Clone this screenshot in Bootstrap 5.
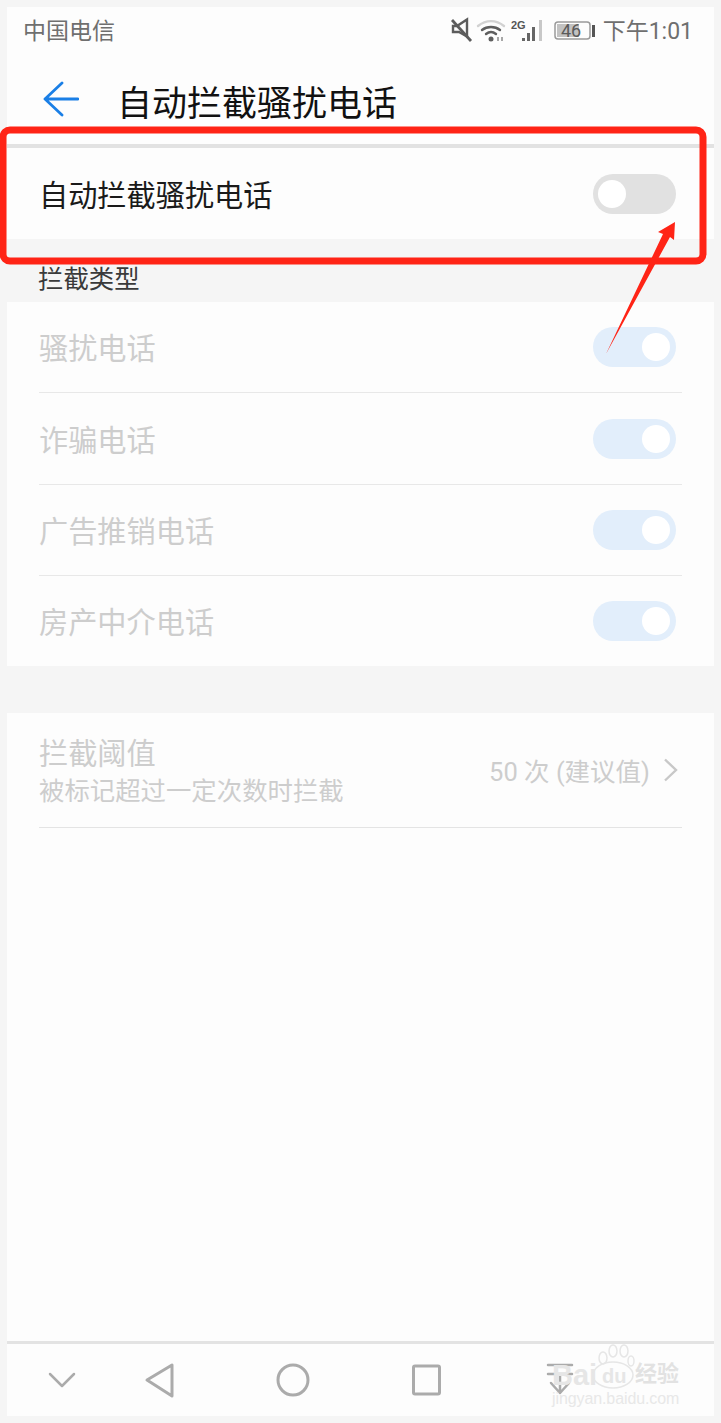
<!DOCTYPE html>
<html lang="zh">
<head>
<meta charset="utf-8">
<title>自动拦截骚扰电话</title>
<link rel="stylesheet" href="https://cdn.jsdelivr.net/npm/bootstrap@5.3.0/dist/css/bootstrap.min.css">
<style>
html,body{height:100%;margin:0}
body{background:#f5f5f5;font-family:Roboto,"Noto Sans CJK SC",sans-serif;padding:7px;position:relative;overflow:hidden}
.phone{height:1409px;display:flex;flex-direction:column}
.sbar{height:48px;background:#fdfdfd;padding:0 21px 0 16px;color:#6f6f6f;font-size:23px;line-height:48px}
.sbar svg{display:block}
.sbar span{margin-top:2px}
.tbar{height:89px;background:#fdfdfd;padding-left:36px;gap:38px}
.tbar svg{margin-top:-1px}
.tbar .ttl{font-size:35px;color:#111;line-height:1;margin-top:9px}
.topline{height:4px;background:#e2e2e2}
.mainrow{height:91px;background:#fdfdfd;padding:0 38px 0 32px;font-size:29.2px;color:#1a1a1a;line-height:1}
.mainrow span{margin-top:6px}
.mainrow .tog{margin-top:1px}
.sect{height:63px;color:#3a3a3a;font-size:25.4px;line-height:1;padding:28px 0 0 31px}
.panel{background:#fdfdfd;padding:0 32px}
.swrow{height:91px;font-size:29.2px;color:#cdcdcd;line-height:1;border-bottom:1px solid #e8e8e8;padding-right:6px}
.swrow.tall{height:92px}
.swrow span{margin-top:6px}
.swrow.last{border-bottom:0;height:90px}
.tog{width:83px;height:40px;border-radius:20px;flex:none;padding:6px;display:flex}
.tog i{display:block;width:28px;height:28px;border-radius:50%;background:#fff}
.tog.off{background:#e1e1e1}
.tog.off i{margin-left:-1px}
.tog.on{background:#e2eefb;justify-content:flex-end}
.gapz{height:47px}
.rest{flex:1 1 auto}
.thr{height:115px;border-bottom:1px solid #e4e4e4;color:#cdcdcd}
.thr .a{font-size:29.2px;line-height:36px;margin-top:2px}
.thr .b{font-size:25.4px;line-height:32px;margin-top:3px}
.thr .c{font-size:25.5px;gap:13px;padding-right:4px}
.thr .c span{margin-top:4px}
.navline{height:3px;background:#e3e3e3}
.navz{height:72px;background:#fdfdfd;position:relative}
.navz svg{position:absolute;left:0;top:0}
.wm{position:absolute;left:545px;top:0;line-height:1;white-space:nowrap;font-family:"Liberation Sans","Noto Sans CJK SC",sans-serif}
.wm .w1{position:absolute;left:0;top:17px;font-size:29px;font-weight:700;color:#e6e6e6}
.wm .w4{position:absolute;left:50px;top:22px;font-size:20px;font-weight:700;color:#e6e6e6}
.wm .w2{position:absolute;left:83px;top:19px;font-size:22px;font-weight:700;color:#e2e2e2}
.wm .w3{position:absolute;left:0;top:47px;font-size:16px;letter-spacing:-.1px;color:#e8e8e8}
.anno{position:absolute;left:0;top:0;pointer-events:none}
</style>
</head>
<body>
<div class="phone">
  <div class="sbar d-flex align-items-center justify-content-between">
    <span>中国电信</span>
    <div class="d-flex align-items-center">
      <svg width="152" height="32" viewBox="0 0 152 32" fill="none">
        <g stroke="#5c5c5c"><path d="M1 5 20 26" stroke-width="2.800"/><path d="M2 11h4l10-6.500v17L8 17H2z" stroke-width="2.400"/></g>
        <g stroke-linecap="round" fill="none"><path d="M27 11c8-6.500 18-6.500 26 0" stroke="#d2d2d2" stroke-width="2.400"/><path d="M31 15c5-4 13-4 18 0" stroke="#5e5e5e" stroke-width="2.400"/><path d="M35 19c3-2.400 7-2.400 10 0" stroke="#5e5e5e" stroke-width="2.400"/></g>
        <circle cx="40" cy="24" r="2.500" fill="#5e5e5e"/>
        <path d="M47 22v4M51 26v-4" stroke="#8a8a8a" stroke-width="1.500"/>
        <text x="60" y="14" font-size="11" font-weight="700" fill="#555" font-family="Liberation Sans">2G</text>
        <g fill="#666"><rect x="71" y="23" width="3" height="3"/><rect x="76" y="18" width="3" height="8"/><rect x="81" y="12" width="3" height="14"/></g><rect x="88" y="5" width="3" height="21" fill="#c8c8c8"/>
        <rect x="104" y="7" width="35" height="17" rx="3" fill="none" stroke="#9a9a9a" stroke-width="1.500"/>
        <rect x="106" y="9" width="22" height="13" fill="#c2c2c2"/>
        <text x="110" y="22" font-size="18" fill="#5a5a5a" font-family="Roboto">46</text>
        <rect x="141" y="10" width="3" height="12" fill="#555"/>
      </svg>
      <span>下午1:01</span>
    </div>
  </div>
  <div class="tbar d-flex align-items-center">
    <svg width="36" height="36" viewBox="0 0 36 36" fill="none" stroke="#1a7fe6" stroke-width="2.800" stroke-linecap="round" stroke-linejoin="round"><path d="M19 2 2 18l17 16M2 18h33"/></svg>
    <div class="ttl">自动拦截骚扰电话</div>
  </div>
  <div class="topline"></div>
  <div class="mainrow d-flex align-items-center justify-content-between">
    <span>自动拦截骚扰电话</span>
    <div class="tog off"><i></i></div>
  </div>
  <div class="sect">拦截类型</div>
  <div class="panel">
    <div class="swrow d-flex align-items-center justify-content-between"><span>骚扰电话</span><div class="tog on"><i></i></div></div>
    <div class="swrow tall d-flex align-items-center justify-content-between"><span>诈骗电话</span><div class="tog on"><i></i></div></div>
    <div class="swrow d-flex align-items-center justify-content-between"><span>广告推销电话</span><div class="tog on"><i></i></div></div>
    <div class="swrow last d-flex align-items-center justify-content-between"><span>房产中介电话</span><div class="tog on"><i></i></div></div>
  </div>
  <div class="gapz"></div>
  <div class="panel rest">
    <div class="thr d-flex align-items-center justify-content-between">
      <div><div class="a">拦截阈值</div><div class="b">被标记超过一定次数时拦截</div></div>
      <div class="c d-flex align-items-center"><span>50 次 (建议值)</span>
        <svg width="15" height="24" viewBox="0 0 15 24" fill="none" stroke="#c8c8c8" stroke-width="2.400"><path d="M2 1.500 13 12 2 22.500"/></svg>
      </div>
    </div>
  </div>
  <div class="navline"></div>
  <div class="navz">
    <svg width="707" height="72" viewBox="0 0 707 72" fill="none" stroke="#ababab" stroke-linecap="round" stroke-linejoin="round">
      <path d="M43 30 55 42 67 30" stroke-width="2.500"/>
      <path d="M165 21v31L140 36z" stroke-width="3"/>
      <circle cx="286" cy="36" r="15" stroke-width="3"/>
      <rect x="406.500" y="22" width="26" height="28" rx="1.500" stroke-width="3"/>
      <path d="M541 21h24M541 30h24M553 31v18M544 39l9 10 9-10" stroke-width="2.500"/>
    </svg>
    <div class="wm"><span class="w1">Bai</span><span class="w4">du</span><span class="w2">经验</span><span class="w3">jingyan.baidu.com</span></div>
  </div>
</div>
<svg class="anno" width="721" height="1423" viewBox="0 0 721 1423" fill="none">
  <rect x="3" y="130" width="700" height="131" rx="7" stroke="#ff2416" stroke-width="7"/>
  <path d="M606 354 663 234 658 232 675 222 674 240 670 237 Z" fill="#ff2416"/>
  <g stroke="#e6e6e6" stroke-width="1.500"><ellipse cx="603" cy="1358" rx="4" ry="6"/><ellipse cx="613" cy="1351" rx="4" ry="6"/><ellipse cx="624" cy="1351" rx="4" ry="6"/><ellipse cx="631" cy="1361" rx="3" ry="5"/><ellipse cx="613" cy="1375" rx="20" ry="13"/></g>
</svg>
</body>
</html>
